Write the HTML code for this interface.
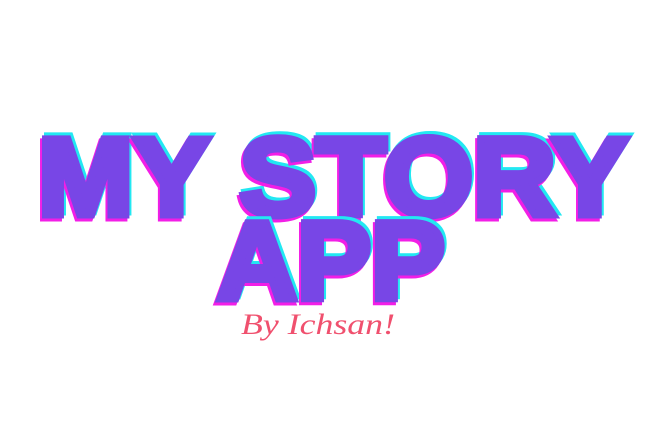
<!DOCTYPE html>
<html><head><style>
html,body{margin:0;padding:0;background:#fff;width:664px;height:436px;overflow:hidden}
</style></head><body>
<svg width="664" height="436" viewBox="0 0 664 436" xmlns="http://www.w3.org/2000/svg">
<g font-family="Liberation Sans, sans-serif" font-weight="bold" font-size="110" stroke-width="7" stroke-linejoin="miter">
  <text x="40" y="212" textLength="590" lengthAdjust="spacingAndGlyphs" fill="#22e8f2" stroke="#22e8f2">MY STORY</text>
  <text x="36" y="218" textLength="590" lengthAdjust="spacingAndGlyphs" fill="#f21ee6" stroke="#f21ee6">MY STORY</text>
  <text x="38" y="215" textLength="590" lengthAdjust="spacingAndGlyphs" fill="#7846e6" stroke="#7846e6">MY STORY</text>
  <text x="219" y="296" textLength="228" lengthAdjust="spacingAndGlyphs" fill="#22e8f2" stroke="#22e8f2">APP</text>
  <text x="215" y="302" textLength="228" lengthAdjust="spacingAndGlyphs" fill="#f21ee6" stroke="#f21ee6">APP</text>
  <text x="217" y="299" textLength="228" lengthAdjust="spacingAndGlyphs" fill="#7846e6" stroke="#7846e6">APP</text>
</g>
<text x="241" y="334" textLength="154" lengthAdjust="spacingAndGlyphs" font-family="Liberation Serif, serif" font-style="italic" font-size="30" fill="#f0506e">By Ichsan!</text>
</svg>
</body></html>
